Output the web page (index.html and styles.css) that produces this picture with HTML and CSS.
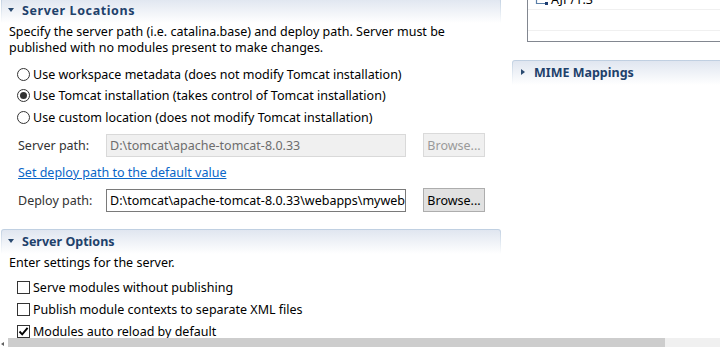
FILE: index.html
```html
<!DOCTYPE html>
<html>
<head>
<meta charset="utf-8">
<link rel="stylesheet" href="styles.css">
</head>
<body>
<div class="window">
  <div class="main">
    <div class="left">
      <section class="section loc">
        <div class="sec-head"><div class="sec-head-in"><span class="tri-down"></span><span class="sec-title wide">Server Locations</span></div></div>
        <p class="desc">Specify the server path (i.e. catalina.base) and deploy path. Server must be<br>published with no modules present to make changes.</p>
        <div class="radios">
          <div class="radio-row"><span class="radio"></span><span>Use workspace metadata (does not modify Tomcat installation)</span></div>
          <div class="radio-row"><span class="radio on"></span><span>Use Tomcat installation (takes control of Tomcat installation)</span></div>
          <div class="radio-row"><span class="radio"></span><span>Use custom location (does not modify Tomcat installation)</span></div>
        </div>
        <div class="field-row first">
          <span class="flabel dim">Server path:</span>
          <div class="input disabled">D:\tomcat\apache-tomcat-8.0.33</div>
          <div class="btn disabled">Browse...</div>
        </div>
        <a class="link">Set deploy path to the default value</a>
        <div class="field-row deploy">
          <span class="flabel dim">Deploy path:</span>
          <div class="input">D:\tomcat\apache-tomcat-8.0.33\webapps\myweb</div>
          <div class="btn">Browse...</div>
        </div>
      </section>
      <section class="section opts">
        <div class="sec-head"><div class="sec-head-in"><span class="tri-down"></span><span class="sec-title">Server Options</span></div></div>
        <p class="desc">Enter settings for the server.</p>
        <div class="checks">
          <div class="check-row"><span class="check"></span><span>Serve modules without publishing</span></div>
          <div class="check-row"><span class="check"></span><span>Publish module contexts to separate XML files</span></div>
          <div class="check-row"><span class="check"><svg width="11" height="11" viewBox="0 0 11 11"><path d="M1.5 5.5 L4.2 8.3 L9.6 1.8" fill="none" stroke="#000" stroke-width="1.9"/></svg></span><span>Modules auto reload by default</span></div>
        </div>
      </section>
    </div>
    <div class="right">
      <div class="table">
        <div class="trow"><svg class="ticon" width="14" height="14" viewBox="0 0 14 14"><path d="M1.5 1 V11.5 H10" fill="none" stroke="#5a7fa8" stroke-width="1.2"/><rect x="10" y="10" width="3" height="3" fill="#1d3d72"/></svg><span>AJP/1.3</span></div>
        <div class="trow"></div>
        <div class="trow last"></div>
      </div>
      <div class="sec-head mime"><div class="sec-head-in"><span class="tri-right"></span><span class="sec-title">MIME Mappings</span></div></div>
    </div>
  </div>
  <div class="hscroll"><span class="harrow"></span><span class="thumb"></span><span class="track"></span></div>
</div>
</body>
</html>
```

FILE: styles.css
```css
html, body {
  margin: 0;
  padding: 0;
  background: #fff;
}
body {
  font-family: "Noto Sans", "Liberation Sans", sans-serif;
  font-size: 12.5px;
  color: #000;
}
.window {
  width: 720px;
  height: 347px;
  overflow: hidden;
  display: flex;
  flex-direction: column;
}
.main {
  height: 338px;
  display: flex;
  overflow: hidden;
}
.left {
  width: 502px;
  flex: none;
}
.right {
  flex: 1;
  margin-left: 10px;
  min-width: 0;
}

/* section headers */
.sec-head {
  margin-left: 1px;
  width: 500px;
  height: 26px;
  box-sizing: border-box;
  padding: 1px 1px 0;
  background: linear-gradient(#bfcfe1, #fff 25px);
  border-radius: 3px 3px 0 0;
}
.sec-head-in {
  height: 25px;
  box-sizing: border-box;
  padding: 0 0 3px 6px;
  display: flex;
  align-items: center;
  background: linear-gradient(#e0e6f0, #fff 24px);
  border-radius: 2px 2px 0 0;
}
.loc .sec-head {
  margin-top: -2px;
}
.tri-down {
  width: 0;
  height: 0;
  border-left: 3.5px solid transparent;
  border-right: 3.5px solid transparent;
  border-top: 4px solid #2a4a70;
  margin-right: 8px;
}
.tri-right {
  width: 0;
  height: 0;
  border-top: 3.5px solid transparent;
  border-bottom: 3.5px solid transparent;
  border-left: 4px solid #2a4a70;
  margin-left: 2px;
  margin-right: 9px;
}
.sec-title {
  font-weight: bold;
  color: #1e416b;
}
.sec-title.wide {
  letter-spacing: 0.6px;
}

.desc {
  margin: 0;
  padding-left: 9px;
  line-height: 16px;
  white-space: nowrap;
}

/* radios */
.radios {
  margin-top: 7.5px;
  padding-left: 17px;
}
.radio-row,
.check-row {
  display: flex;
  align-items: center;
  white-space: nowrap;
}
.radio-row {
  height: 21.5px;
}
.radio {
  width: 13px;
  height: 13px;
  box-sizing: border-box;
  border: 1px solid #333;
  border-radius: 50%;
  background: #fff;
  margin-right: 3px;
  display: flex;
  align-items: center;
  justify-content: center;
  flex: none;
}
.radio.on::after {
  content: "";
  width: 7px;
  height: 7px;
  border-radius: 50%;
  background: #333;
}

/* fields */
.field-row {
  display: flex;
  align-items: center;
  height: 24px;
  padding-left: 18px;
}
.field-row.first {
  margin-top: 5px;
}
.field-row.deploy {
  margin-top: 6px;
}
.flabel {
  width: 88px;
  flex: none;
}
.dim {
  color: #333;
}
.input {
  width: 300px;
  height: 23px;
  box-sizing: border-box;
  border: 1px solid #7a7a7a;
  background: #fff;
  padding-left: 3px;
  line-height: 21px;
  margin-right: 17px;
  white-space: nowrap;
  overflow: hidden;
  flex: none;
}
.input.disabled {
  background: #f0f0f0;
  border-color: #d9d9d9;
  color: #6d6d6d;
}
.btn {
  width: 62px;
  height: 24px;
  box-sizing: border-box;
  border: 1px solid #adadad;
  background: #e1e1e1;
  display: flex;
  align-items: center;
  justify-content: center;
  flex: none;
}
.btn.disabled {
  background: #f0f0f0;
  border-color: #dadada;
  color: #9a9a9a;
}
.link {
  display: block;
  width: fit-content;
  margin: 7px 0 0 18px;
  line-height: 18px;
  color: #0a66c8;
  text-decoration: underline;
  cursor: pointer;
}

/* options */
.opts {
  margin-top: 17px;
}
.checks {
  margin-top: 5px;
  padding-left: 17px;
}
.check-row {
  height: 22px;
}
.check {
  width: 13px;
  height: 13px;
  box-sizing: border-box;
  border: 1px solid #333;
  background: #fff;
  margin-right: 3px;
  display: flex;
  align-items: center;
  justify-content: center;
  flex: none;
}

/* right column */
.table {
  margin-left: 15px;
  margin-top: -12px;
  width: 260px;
  border: 1px solid #828790;
  border-right: none;
}
.trow {
  height: 20px;
  border-bottom: 1px solid #f0f0f0;
  display: flex;
  align-items: center;
  padding-left: 7px;
}
.trow.last {
  height: 10px;
  border-bottom: none;
}
.ticon {
  margin-right: 2px;
  flex: none;
}
.mime {
  margin-left: 0;
  margin-top: 18px;
  width: 240px;
  border-radius: 3px 0 0 0;
}
.mime .sec-head-in {
  border-radius: 2px 0 0 0;
}

/* horizontal scrollbar */
.hscroll {
  height: 9px;
  display: flex;
  flex: none;
}
.harrow {
  width: 8px;
  background: #fff;
  position: relative;
}
.harrow::after {
  content: "";
  position: absolute;
  left: 1px;
  top: 4px;
  border-top: 2px solid transparent;
  border-bottom: 2px solid transparent;
  border-right: 3px solid #606060;
}
.thumb {
  width: 657px;
  background: #cdcdcd;
}
.track {
  flex: 1;
  background: #f0f0f0;
}
```
